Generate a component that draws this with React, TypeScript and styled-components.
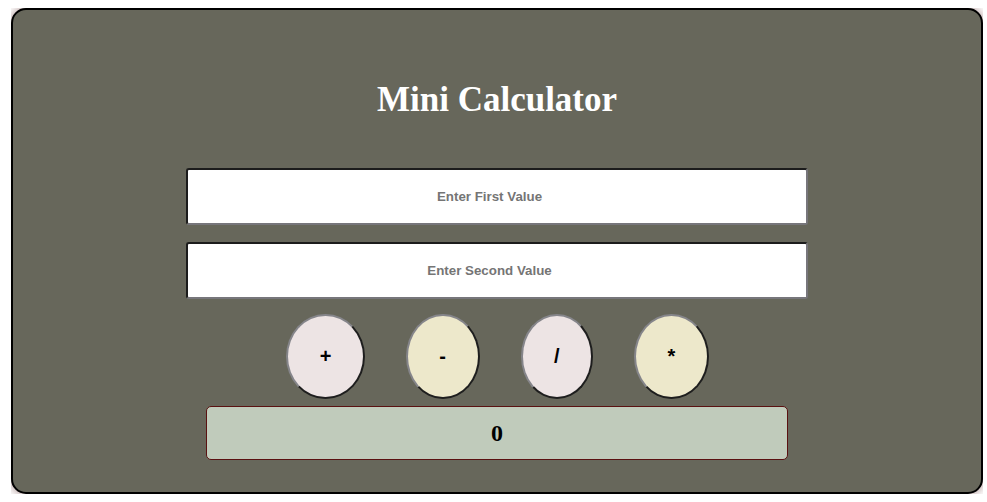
import React, { useState } from 'react'
import styled, { createGlobalStyle } from 'styled-components'

const GlobalStyle = createGlobalStyle`
  body {
    margin: 8px 4px 8px 11px;
    font-family: "Liberation Serif", "Times New Roman", serif;
    background: #ffffff;
  }
`

const Card = styled.div`
  box-sizing: border-box;
  height: 486px;
  background-color: #67675b;
  border: 2px solid #000;
  border-radius: 15px;
  box-shadow: 0 0 8px 1px #b49c9c;
  display: flex;
  flex-direction: column;
  align-items: center;
`

const Title = styled.h1`
  margin: 70px 0 0;
  height: 52px;
  line-height: 40px;
  font-size: 35px;
  font-weight: bold;
  color: #fff;
`

const Fields = styled.div`
  margin-top: 36px;
  display: flex;
  flex-direction: column;
  gap: 17px;
`

const Field = styled.input`
  box-sizing: border-box;
  width: 622px;
  height: 57px;
  margin-right: 1px;
  padding: 0 15px 0 1px;
  border: 2px solid;
  border-color: #1c1c1c #77767b #77767b #1c1c1c;
  border-radius: 3px;
  background: #fff;
  text-align: center;
  font-family: "Liberation Sans", Arial, sans-serif;
  font-size: 13.33px;
  font-weight: bold;
  outline: none;
  &::placeholder {
    color: #757575;
  }
`

const Keys = styled.div`
  margin-top: 15px;
  margin-left: 1px;
  display: flex;
  gap: 41px;
`

const Key = styled.button<{ $tone: 'rose' | 'cream' }>`
  box-sizing: border-box;
  height: 85px;
  padding: 0 31.5px;
  border: 2px solid;
  border-color: #85858a #1e1e1e #1e1e1e #85858a;
  border-radius: 50%;
  background-color: ${(p) => (p.$tone === 'rose' ? '#ede4e4' : '#ede8cb')};
  color: #000;
  font-family: "Liberation Sans", Arial, sans-serif;
  font-size: 20px;
  font-weight: bold;
  cursor: pointer;
`

const Result = styled.div`
  box-sizing: border-box;
  margin-top: 7px;
  width: 582px;
  height: 54px;
  border: 1px solid #5a1111;
  border-radius: 5px;
  background-color: #c0cbbb;
  display: flex;
  align-items: center;
  justify-content: center;
  font-size: 24px;
  font-weight: bold;
  color: #000;
`

const ops: { sign: string; tone: 'rose' | 'cream' }[] = [
  { sign: '+', tone: 'rose' },
  { sign: '-', tone: 'cream' },
  { sign: '/', tone: 'rose' },
  { sign: '*', tone: 'cream' },
]

export default function App() {
  const [a, setA] = useState('')
  const [b, setB] = useState('')
  const [result, setResult] = useState<number | string>(0)

  const calc = (sign: string) => {
    const x = Number(a)
    const y = Number(b)
    if (sign === '+') setResult(x + y)
    if (sign === '-') setResult(x - y)
    if (sign === '/') setResult(x / y)
    if (sign === '*') setResult(x * y)
  }

  return (
    <>
      <GlobalStyle />
      <Card>
        <Title>Mini Calculator</Title>
        <Fields>
          <Field placeholder="Enter First Value" value={a} onChange={(e) => setA(e.target.value)} />
          <Field placeholder="Enter Second Value" value={b} onChange={(e) => setB(e.target.value)} />
        </Fields>
        <Keys>
          {ops.map((op) => (
            <Key key={op.sign} $tone={op.tone} onClick={() => calc(op.sign)}>
              {op.sign}
            </Key>
          ))}
        </Keys>
        <Result>{result}</Result>
      </Card>
    </>
  )
}
